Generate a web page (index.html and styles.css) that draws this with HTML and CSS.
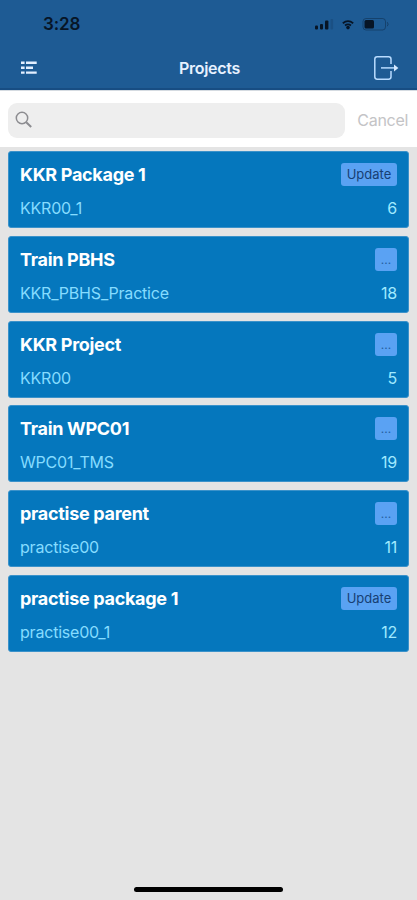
FILE: index.html
```
<!DOCTYPE html>
<html lang="en">
<head>
<meta charset="utf-8">
<title>Projects</title>
<link rel="stylesheet" href="styles.css">
</head>
<body>
<div class="app">
  <header class="top">
    <div class="status">
      <span class="time">3:28</span>
      <svg class="status-icons" width="80" height="16" viewBox="0 0 80 16">
        <g fill="#071526">
          <rect x="2" y="9.5" width="3" height="4" rx="1"/>
          <rect x="7" y="8" width="3" height="5.5" rx="1"/>
          <rect x="12" y="4.5" width="3.4" height="9" rx="1"/>
          <rect x="17.5" y="3" width="2.6" height="10.5" rx="1" opacity=".15"/>
          <circle cx="35" cy="11.6" r="1.8"/>
          <rect x="51.5" y="4" width="9.5" height="8.5" rx="1.5"/>
        </g>
        <path d="M29.8 7.2q5.2-4.2 10.4 0M32 9.5q3-2.3 6 0" fill="none" stroke="#071526" stroke-width="1.8"/>
        <rect x="50" y="2.5" width="22.5" height="11.5" rx="3" fill="none" stroke="#071526" opacity=".35"/>
        <path d="M74.3 6.2q1.6 2 0 4" fill="none" stroke="#071526" opacity=".4"/>
      </svg>
    </div>
    <nav class="nav">
      <svg class="menu" width="18" height="16" viewBox="0 0 18 16" fill="#e3efff">
        <path d="M1 1.4h3.6v2.6H1zM6 1.4h10.7v2.6H6zM1 6.5h3.6v2.4H1zM6 6.5h7v2.4H6zM1 11.4h3.6v2.4H1zM6 11.4h10.7v2.4H6z"/>
      </svg>
      <h1>Projects</h1>
      <svg class="exit" width="28" height="28" viewBox="0 0 28 28" fill="none" stroke="#b9dcff" stroke-width="1.5">
        <path d="M20 10V5.2Q20 2.8 17.6 2.8H6.2Q3.8 2.8 3.8 5.2V22.8Q3.8 25.2 6.2 25.2H17.6Q20 25.2 20 22.8V17"/>
        <path d="M10 13.9h15"/>
        <path d="M23 10.4l4.4 3.5-4.4 3.5z" fill="#d5e9ff" stroke="none"/>
      </svg>
    </nav>
  </header>
  <div class="search">
    <div class="field">
      <svg width="18" height="18" viewBox="0 0 18 18" fill="none" stroke="#8c8c90">
        <circle cx="7" cy="7" r="5.7" stroke-width="1.5"/>
        <path d="M11.2 11.2l5 4.8" stroke-width="2"/>
      </svg>
    </div>
    <span class="cancel">Cancel</span>
  </div>
  <main class="list">
    <article class="card"><div class="row"><h2>KKR Package 1</h2><span class="badge">Update</span></div><div class="row sub"><span>KKR00_1</span><span class="count">6</span></div></article>
    <article class="card"><div class="row"><h2>Train PBHS</h2><span class="badge more">...</span></div><div class="row sub"><span>KKR_PBHS_Practice</span><span class="count">18</span></div></article>
    <article class="card"><div class="row"><h2>KKR Project</h2><span class="badge more">...</span></div><div class="row sub"><span>KKR00</span><span class="count">5</span></div></article>
    <article class="card"><div class="row"><h2>Train WPC01</h2><span class="badge more">...</span></div><div class="row sub"><span>WPC01_TMS</span><span class="count">19</span></div></article>
    <article class="card"><div class="row"><h2>practise parent</h2><span class="badge more">...</span></div><div class="row sub"><span>practise00</span><span class="count">11</span></div></article>
    <article class="card"><div class="row"><h2>practise package 1</h2><span class="badge">Update</span></div><div class="row sub"><span>practise00_1</span><span class="count">12</span></div></article>
  </main>
  <footer class="home"><div class="bar"></div></footer>
</div>
</body>
</html>
```
FILE: styles.css
```
* { box-sizing: border-box; }
body { margin: 0; font-family: Inter, "Liberation Sans", sans-serif; }
h1, h2 { margin: 0; }
svg { display: block; }
.app { height: 900px; display: flex; flex-direction: column; background: #e4e4e4; overflow: hidden; }
.top { height: 90px; flex: none; background: #1e5b94; border-bottom: 2px solid #174d83; }
.status { height: 47px; padding: 1px 24px 0 43px; display: flex; align-items: center; justify-content: space-between; }
.time { font-size: 17px; font-weight: 600; color: #071526; letter-spacing: -0.1px; }
.status-icons { margin-right: 0; }
.nav { height: 41px; padding: 0 18px 0 20px; display: grid; grid-template-columns: 1fr auto 1fr; align-items: center; }
.nav h1 { font-size: 16px; font-weight: 600; color: #e6f1ff; letter-spacing: -0.3px; }
.exit { justify-self: end; }
.search { height: 57px; flex: none; background: #fff; border-top: 1px solid #d5dbe1; display: flex; align-items: center; gap: 12px; padding: 2px 9px 0 8px; }
.field { flex: 1; height: 35px; border-radius: 9px; background: #eee; display: flex; align-items: center; padding-left: 7px; }
.cancel { font-size: 16px; color: #c4c4c6; letter-spacing: -0.3px; }
.list { padding: 4px 8px 0; display: flex; flex-direction: column; gap: 7.8px; }
.card { height: 77px; border-radius: 3px; background: #0577bd; border: 1px solid #3b92ca; padding: 10px 11px 0; }
.row { height: 25px; display: flex; align-items: center; justify-content: space-between; }
.row h2 { font-size: 18px; font-weight: 700; color: #fff; letter-spacing: -0.3px; white-space: nowrap; }
.badge { height: 23px; line-height: 23px; width: 56px; text-align: center; border-radius: 3px; background: #5aa2f3; color: #173f73; font-size: 13px; }
.badge.more { width: 22px; font-size: 12px; color: #24609f; }
.sub { height: 24px; margin-top: 9px; font-size: 16px; color: #86dcff; letter-spacing: -0.2px; }
.count { color: #a0eaff; }
.home { margin-top: auto; height: 13px; display: flex; justify-content: center; }
.bar { width: 149px; height: 5px; border-radius: 3px; background: #000; }
```
